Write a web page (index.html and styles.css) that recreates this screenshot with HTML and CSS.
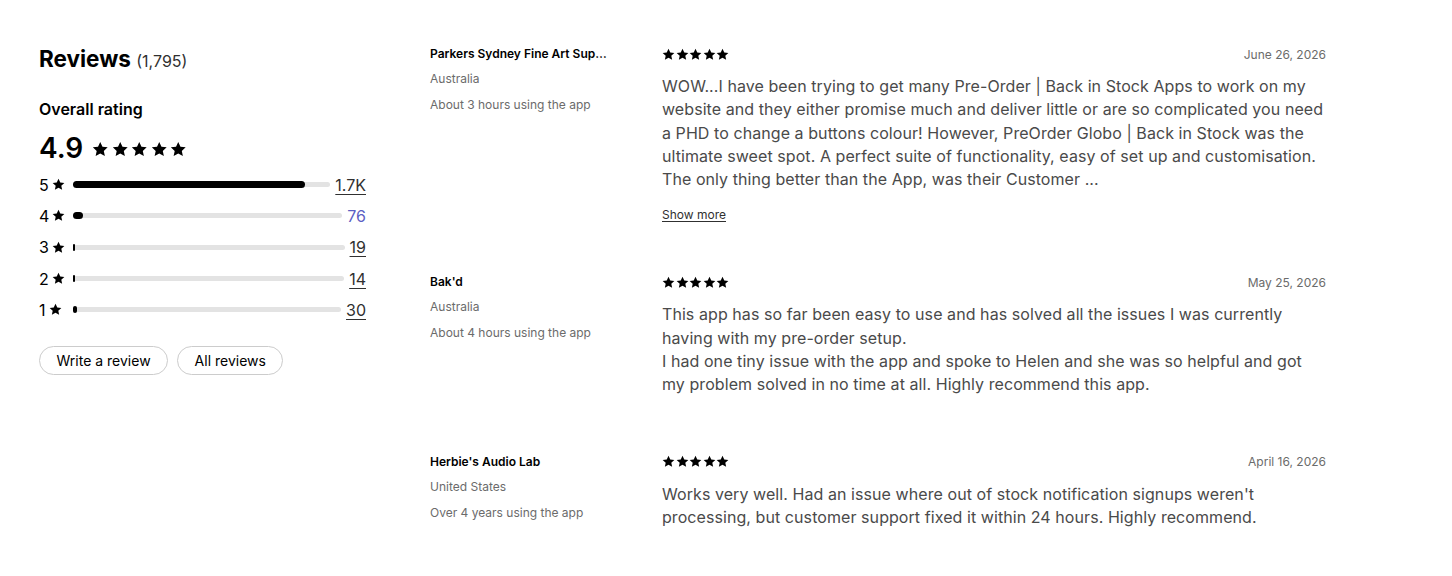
FILE: index.html
```html
<!DOCTYPE html>
<html lang="en">
  <head>
    <meta charset="UTF-8" />
    <meta name="viewport" content="width=device-width, initial-scale=1.0" />
    <title>Reviews</title>
    <link rel="stylesheet" href="styles.css">
  </head>
  <body>
    <svg class="defs" width="0" height="0" aria-hidden="true">
      <symbol id="star" viewBox="0 0 20 20">
        <path d="M10 1.2l2.7 5.8 6.3.7-4.7 4.3 1.3 6.2L10 15.1l-5.6 3.1 1.3-6.2L1 7.7l6.3-.7z" />
      </symbol>
    </svg>

    <div class="page">
      <aside class="summary">
        <h2 class="title">Reviews <span class="total">(1,795)</span></h2>

        <h3 class="overall-label">Overall rating</h3>
        <div class="overall">
          <span class="score">4.9</span>
          <span class="stars stars-lg">
            <svg><use href="#star" /></svg>
            <svg><use href="#star" /></svg>
            <svg><use href="#star" /></svg>
            <svg><use href="#star" /></svg>
            <svg><use href="#star" /></svg>
          </span>
        </div>

        <ul class="breakdown">
          <li class="row">
            <span class="level">5 <svg><use href="#star" /></svg></span>
            <span class="track"><span class="fill" style="width: 90%"></span></span>
            <a class="count" href="#">1.7K</a>
          </li>
          <li class="row">
            <span class="level">4 <svg><use href="#star" /></svg></span>
            <span class="track"><span class="fill" style="width: 10px"></span></span>
            <a class="count visited" href="#">76</a>
          </li>
          <li class="row">
            <span class="level">3 <svg><use href="#star" /></svg></span>
            <span class="track"><span class="fill" style="width: 2px"></span></span>
            <a class="count" href="#">19</a>
          </li>
          <li class="row">
            <span class="level">2 <svg><use href="#star" /></svg></span>
            <span class="track"><span class="fill" style="width: 2px"></span></span>
            <a class="count" href="#">14</a>
          </li>
          <li class="row">
            <span class="level">1 <svg><use href="#star" /></svg></span>
            <span class="track"><span class="fill" style="width: 4px"></span></span>
            <a class="count" href="#">30</a>
          </li>
        </ul>

        <div class="actions">
          <button class="pill">Write a review</button>
          <button class="pill">All reviews</button>
        </div>
      </aside>

      <section class="reviews">
        <article class="review">
          <div class="author">
            <div class="name">Parkers Sydney Fine Art Supplies</div>
            <div class="meta">Australia</div>
            <div class="meta">About 3 hours using the app</div>
          </div>
          <div class="content">
            <div class="head">
              <span class="stars stars-sm">
                <svg><use href="#star" /></svg>
                <svg><use href="#star" /></svg>
                <svg><use href="#star" /></svg>
                <svg><use href="#star" /></svg>
                <svg><use href="#star" /></svg>
              </span>
              <span class="date">June 26, 2026</span>
            </div>
            <p class="text">WOW...I have been trying to get many Pre-Order | Back in Stock Apps to work on my website and they either promise much and deliver little or are so complicated you need a PHD to change a buttons colour! However, PreOrder Globo | Back in Stock was the ultimate sweet spot. A perfect suite of functionality, easy of set up and customisation. The only thing better than the App, was their Customer ...</p>
            <a class="more" href="#">Show more</a>
          </div>
        </article>

        <article class="review">
          <div class="author">
            <div class="name">Bak'd</div>
            <div class="meta">Australia</div>
            <div class="meta">About 4 hours using the app</div>
          </div>
          <div class="content">
            <div class="head">
              <span class="stars stars-sm">
                <svg><use href="#star" /></svg>
                <svg><use href="#star" /></svg>
                <svg><use href="#star" /></svg>
                <svg><use href="#star" /></svg>
                <svg><use href="#star" /></svg>
              </span>
              <span class="date">May 25, 2026</span>
            </div>
            <p class="text">This app has so far been easy to use and has solved all the issues I was currently having with my pre-order setup.<br />I had one tiny issue with the app and spoke to Helen and she was so helpful and got my problem solved in no time at all. Highly recommend this app.</p>
          </div>
        </article>

        <article class="review">
          <div class="author">
            <div class="name">Herbie's Audio Lab</div>
            <div class="meta">United States</div>
            <div class="meta">Over 4 years using the app</div>
          </div>
          <div class="content">
            <div class="head">
              <span class="stars stars-sm">
                <svg><use href="#star" /></svg>
                <svg><use href="#star" /></svg>
                <svg><use href="#star" /></svg>
                <svg><use href="#star" /></svg>
                <svg><use href="#star" /></svg>
              </span>
              <span class="date">April 16, 2026</span>
            </div>
            <p class="text">Works very well. Had an issue where out of stock notification signups weren't processing, but customer support fixed it within 24 hours. Highly recommend.</p>
          </div>
        </article>
      </section>
    </div>
  </body>
</html>
```

FILE: styles.css
```css
body {
  margin: 0;
  font-family: "Inter", "Liberation Sans", sans-serif;
  color: #303030;
  background: #ffffff;
}

.defs {
  position: absolute;
}

svg {
  fill: currentColor;
}

.page {
  display: flex;
  gap: 64px;
  padding: 44px 0 0 39px;
}

/* left column: totals and star breakdown */
.summary {
  width: 327px;
  flex-shrink: 0;
  color: #000;
}

.title {
  margin: 0;
  font-size: 22.5px;
  font-weight: 700;
  line-height: 30px;
}

.total {
  font-size: 16px;
  font-weight: 400;
  color: #303030;
}

.overall-label {
  margin: 23px 0 0;
  font-size: 16px;
  font-weight: 600;
  line-height: 20px;
}

.overall {
  display: flex;
  align-items: center;
  gap: 9px;
  margin-top: 11px;
}

.score {
  font-size: 28px;
  font-weight: 600;
  line-height: 36px;
}

.stars {
  display: inline-flex;
  color: #000;
}

.stars-lg {
  gap: 3px;
  padding-top: 2px;
}

.stars-lg svg {
  width: 16.5px;
  height: 16.5px;
}

.stars-sm {
  gap: 0.6px;
}

.stars-sm svg {
  width: 13px;
  height: 13px;
}

.breakdown {
  list-style: none;
  margin: 3px 0 0;
  padding: 0;
}

.row {
  display: flex;
  align-items: center;
  gap: 5px;
  height: 31.3px;
}

.level {
  display: flex;
  align-items: center;
  gap: 3px;
  width: 29px;
  font-size: 16px;
}

.level svg {
  width: 13px;
  height: 13px;
}

.track {
  flex: 1;
  display: flex;
  align-items: center;
  height: 5px;
  border-radius: 3px;
  background: #e3e3e3;
}

.fill {
  height: 7px;
  border-radius: 4px;
  background: #000;
}

.count {
  font-size: 16px;
  color: #303030;
  text-decoration: underline;
  text-underline-offset: 3px;
  text-decoration-thickness: 1px;
}

.count.visited {
  color: #5c5fc4;
  text-decoration: none;
}

.actions {
  display: flex;
  gap: 9px;
  margin-top: 21px;
}

.pill {
  font-family: inherit;
  font-size: 14px;
  color: #000;
  background: #fff;
  border: 1px solid #cccccc;
  border-radius: 16px;
  height: 29px;
  padding: 0 16.5px;
}

/* right column: individual reviews */
.reviews {
  display: flex;
  flex-direction: column;
  gap: 57px;
  padding-top: 2px;
}

.review {
  display: flex;
  gap: 52px;
}

.author {
  width: 180px;
  font-size: 12px;
}

.name {
  font-weight: 600;
  color: #000;
  line-height: 16px;
  white-space: nowrap;
  overflow: hidden;
  text-overflow: ellipsis;
}

.meta {
  margin-top: 9px;
  color: #6b6b6b;
  line-height: 16px;
}

.meta + .meta {
  margin-top: 10px;
}

.content {
  width: 664px;
}

.head {
  display: flex;
  justify-content: space-between;
  align-items: center;
  height: 16px;
}

.date {
  font-size: 12px;
  color: #6b6b6b;
}

.text {
  margin: 13px 0 0;
  font-size: 16px;
  line-height: 23.3px;
  letter-spacing: 0.07px;
  color: #4a4a4a;
}

.more {
  display: block;
  width: fit-content;
  margin: 16px 0 -6px;
  font-size: 12px;
  line-height: 16px;
  color: #303030;
  text-decoration: underline;
  text-underline-offset: 2px;
}
```
